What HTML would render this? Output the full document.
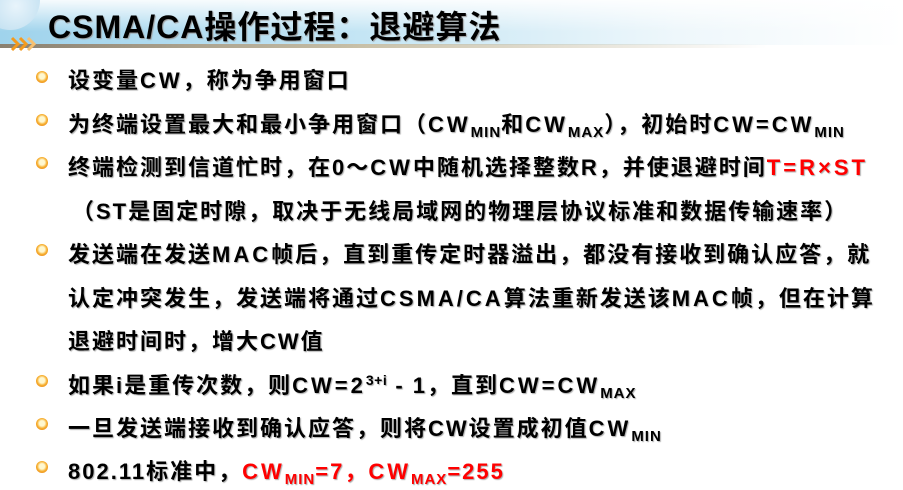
<!DOCTYPE html>
<html><head><meta charset="utf-8"><style>
body{margin:0;width:903px;height:490px;background:#fff;overflow:hidden;position:relative;font-family:"Liberation Sans","Noto Sans CJK SC",sans-serif;}
.hdr{position:absolute;left:0;top:0;width:903px;height:45px;background:linear-gradient(90deg,#9fd3ec 0%,#c4e5f4 40%,#eef7fb 75%,#fff 100%);}
.hdr:after{content:"";position:absolute;left:0;right:0;top:0;height:45px;background:linear-gradient(180deg,rgba(255,255,255,.9),rgba(255,255,255,0) 70%);}
.line{position:absolute;left:0;top:44px;width:903px;height:4px;background:linear-gradient(90deg,#8a8070 0%,#c8c0a8 40%,rgba(255,255,255,0) 85%);}
.title{position:absolute;left:48px;top:2px;font-size:32px;letter-spacing:1px;font-weight:bold;color:#000;white-space:nowrap;z-index:2;text-shadow:1px 1px 1px #999;}
.globe{position:absolute;left:-20px;top:-30px;width:60px;height:60px;border-radius:50%;background:radial-gradient(circle at 60% 60%,#e8f4fb,#a9d3ea);z-index:1;}
.t{position:absolute;left:68px;font-size:22px;letter-spacing:2px;font-weight:bold;color:#000;white-space:nowrap;text-shadow:1px 1px 1px #aaa;}
.w{letter-spacing:3px}
.b{position:absolute;left:36px;width:12px;height:12px;border-radius:50%;background:radial-gradient(circle at 50% 45%,#fff8d0 0 30%,#f7b030 55%,#e07010 100%);}
sub{font-size:15px;letter-spacing:1px;vertical-align:-5px;line-height:0}
sup{font-size:14px;letter-spacing:0.5px;vertical-align:8px;line-height:0}
.r{color:#f00}
</style></head><body>
<div class="hdr"></div><div class="globe"></div><div class="line"></div>
<svg style="position:absolute;left:10px;top:36px;z-index:3" width="28" height="16" viewBox="0 0 28 16"><g fill="none" stroke="#f39a1e" stroke-width="3"><path d="M2 2l6 6-6 6"/><path d="M10 2l6 6-6 6"/><path d="M18 2l6 6-6 6" stroke="#f7c070"/></g></svg>
<div class="title">CSMA/CA操作过程：退避算法</div>

<div class="b" style="top:71px"></div><div class="t" style="top:63px">设变量<span class="w">CW</span>，称为争用窗口</div>
<div class="b" style="top:114px"></div><div class="t" style="top:107px">为终端设置最大和最小争用窗口（<span class="w">CW</span><sub>MIN</sub>和<span class="w">CW</span><sub>MAX</sub>），初始时<span class="w">CW=CW</span><sub>MIN</sub></div>
<div class="b" style="top:157px"></div><div class="t" style="top:150px">终端检测到信道忙时，在0～<span class="w">CW</span>中随机选择整数R，并使退避时间<span class="r w">T=R×ST</span></div>
<div class="t" style="top:194px;left:72px">（ST是固定时隙，取决于无线局域网的物理层协议标准和数据传输速率）</div>
<div class="b" style="top:244px"></div><div class="t" style="top:237px">发送端在发送<span class="w">MAC</span>帧后，直到重传定时器溢出，都没有接收到确认应答，就</div>
<div class="t" style="top:281px">认定冲突发生，发送端将通过<span class="w">CSMA/CA</span>算法重新发送该<span class="w">MAC</span>帧，但在计算</div>
<div class="t" style="top:324px">退避时间时，增大CW值</div>
<div class="b" style="top:375px"></div><div class="t" style="top:368px">如果i是重传次数，则<span class="w">CW=2</span><sup>3+i</sup> - 1，直到<span class="w">CW=CW</span><sub>MAX</sub></div>
<div class="b" style="top:418px"></div><div class="t" style="top:411px">一旦发送端接收到确认应答，则将CW设置成初值<span class="w">CW</span><sub>MIN</sub></div>
<div class="b" style="top:461px"></div><div class="t" style="top:454px">802.11标准中，<span class="r"><span class="w">CW</span><sub>MIN</sub>=7，<span class="w">CW</span><sub>MAX</sub>=255</span></div>
</body></html>
